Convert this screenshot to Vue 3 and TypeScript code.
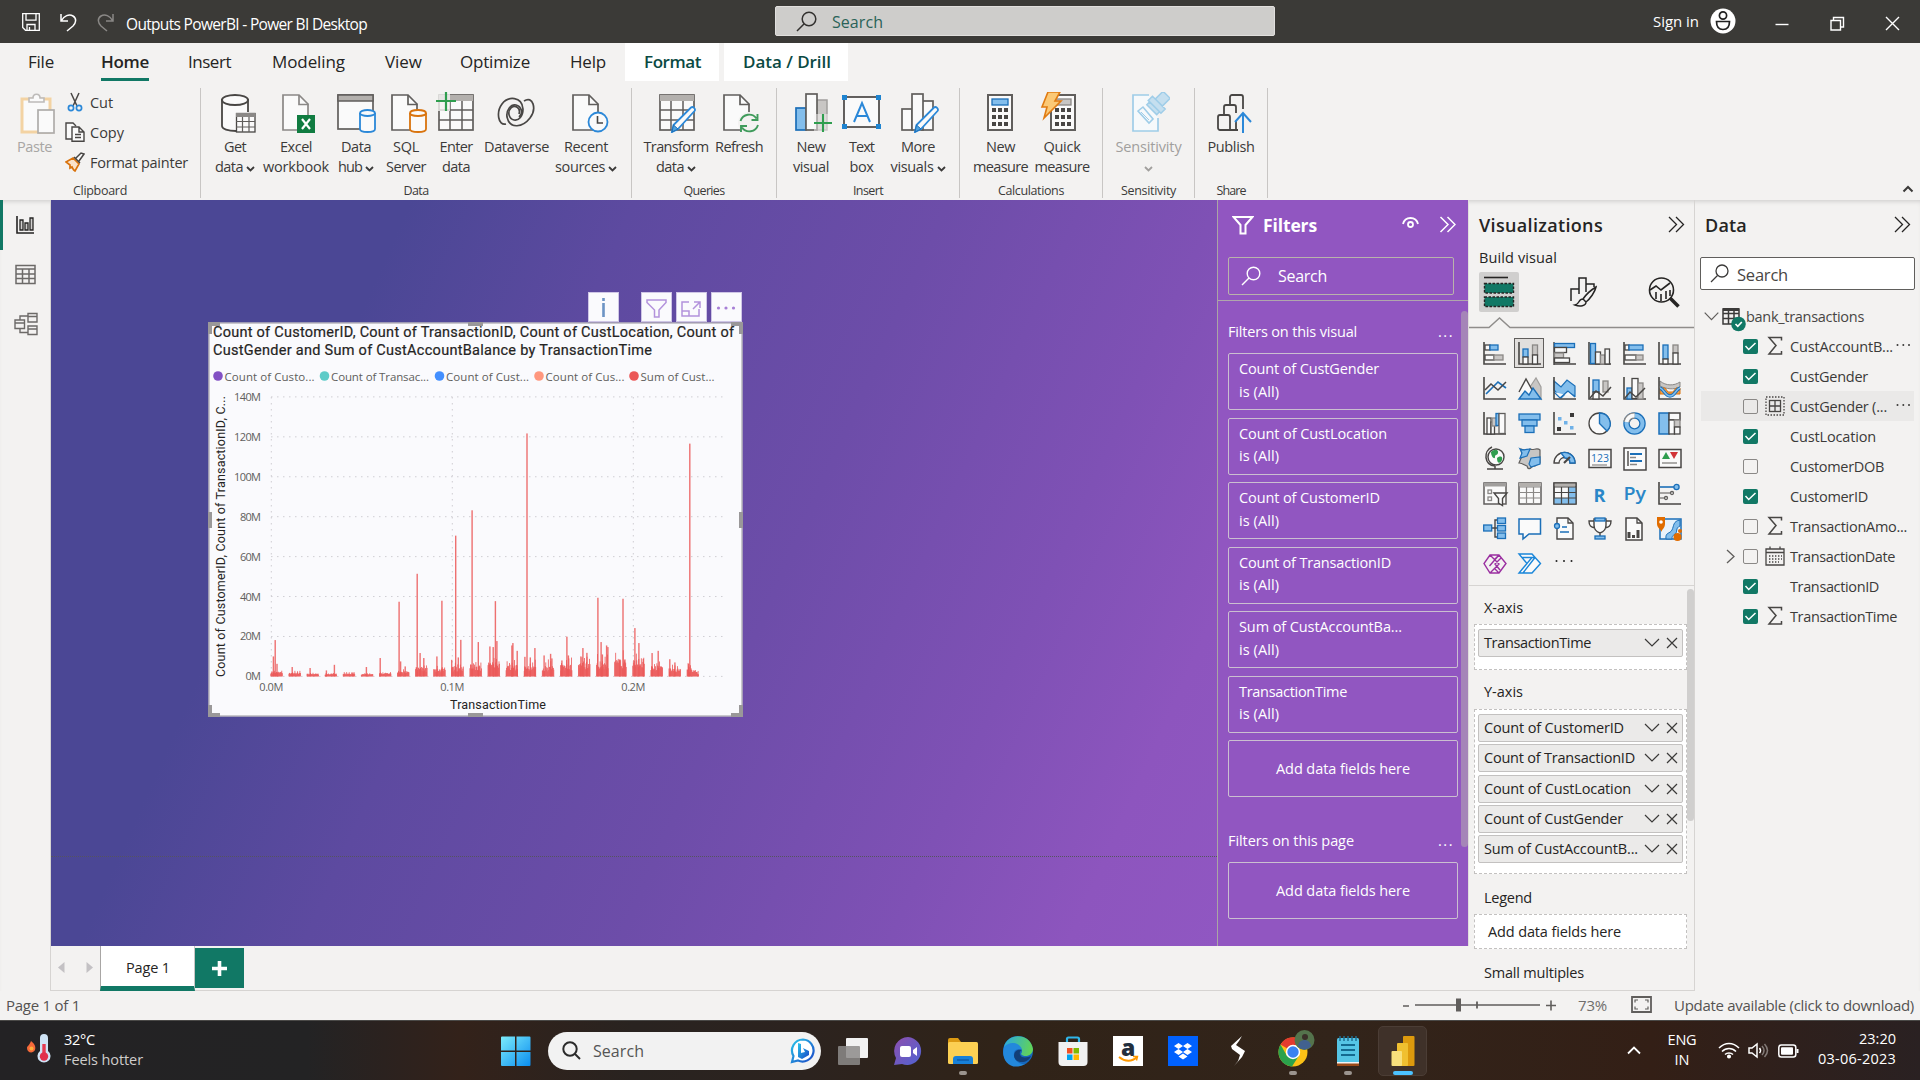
<script setup lang="ts">
import { ref } from 'vue'

interface RibbonButton { icon: string; w: number; lines: [string, number][]; caret?: boolean; off?: boolean; nudge?: number }
interface RibbonGroup { name: string; nameW: number; w: number; pad: number; buttons: RibbonButton[] }
interface Field { label: string; w: number; on: boolean; icon?: string; more?: boolean; hover?: boolean; expand?: boolean }

/* Tightens or loosens tracking so that a label takes the given width. */
const vFit = {
  mounted(el: HTMLElement, binding: { value: number }) {
    const n = (el.textContent ?? '').length
    const w = el.getBoundingClientRect().width
    if (n > 0 && binding.value) el.style.letterSpacing = `${((binding.value - w) / n).toFixed(3)}px`
  },
}

const K = '#484644'
const B = '#83beec'
const BS = '#1b6fb8'
const G = '#c8c6c4'
const R = (x: number, y: number, w: number, h: number, f = '#fafafa', s = K, sw = 1.3) =>
  `<rect x="${x}" y="${y}" width="${w}" height="${h}" fill="${f}" stroke="${s}" stroke-width="${sw}"/>`
const P = (d: string, s = K, sw = 1.4, f = 'none') =>
  `<path d="${d}" fill="${f}" stroke="${s}" stroke-width="${sw}"/>`
const C = (x: number, y: number, r: number, f = 'none', s = K, sw = 1.3) =>
  `<circle cx="${x}" cy="${y}" r="${r}" fill="${f}" stroke="${s}" stroke-width="${sw}"/>`
const AX = P('M1 0V22H23', K, 1.6)
const page = (x: number, s = '#605e5c') => P(`M${x} 3h16l9 9v26h-25z`, s, 1.7, '#fafafa') + P(`M${x + 16} 3v9.500h9.500`, s, 1.7)
const cyl = (x: number, y: number, w: number, h: number, s: string) =>
  P(`M${x} ${y + 3}v${h - 6}c0 4 ${w} 4 ${w} 0v-${h - 6}`, s, 1.8, '#fafafa') +
  `<ellipse cx="${x + w / 2}" cy="${y + 3}" rx="${w / 2}" ry="3" fill="#fafafa" stroke="${s}" stroke-width="1.8"/>`
const pencil = P('M15 40l1.500-7L34 15.500c2-1.500 5 1.500 3.500 3.500L21 37z', '#2b88d8', 1.8, '#fafafa') + P('M15 40l1.500-7 4.500 4z', '#1b6fb8', 1, '#4fa3e0')
const keypad = (x: number) => [18, 25, 32].map((y) => `<path d="M${x} ${y}h16" stroke="${K}" stroke-width="3.800" stroke-dasharray="4 2"/>`).join('')

const icons: Record<string, string> = {
  get: `<path d="M4 8v26c0 3 6 5 14 5V22h12V8z" fill="#fafafa"/><path d="M4 7v27c0 3 6 5 14 5M30 20V7" fill="none" stroke="${K}" stroke-width="1.800"/><ellipse cx="17" cy="8" rx="13" ry="5" fill="#fafafa" stroke="${K}" stroke-width="1.8"/>` + R(18.500, 21.500, 18.500, 18.500) + `<path d="M18 21h19v4H18z" fill="#8a8886"/>` + P('M18 29.500h19M18 35h19M24.500 25v15M31 25v15', '#605e5c', 1.200),
  excel: page(6, '#8a8886') + '<rect x="20" y="23" width="18" height="18" fill="#107c41"/><path d="M25 27l8 10M33 27l-8 10" stroke="#fff" stroke-width="2.200"/>',
  hub: R(2, 3, 35, 34, '#fafafa', '#605e5c', 1.700) + '<path d="M2 3h35v6H2z" fill="#b3b0ad" stroke="#605e5c" stroke-width="1.500"/>' + cyl(24, 18, 15, 22, '#2b88d8'),
  sql: page(4) + cyl(22, 18, 16, 22, '#d9730d'),
  enter: R(4, 3, 34, 35, '#fafafa', '#605e5c', 1.700) + '<path d="M4 3h34v6H4z" fill="#b3b0ad"/>' + P('M4 18h34M4 28h34M15 9v29M27 9v29', '#605e5c', 1.500) + '<path d="M0 0h15v19H0z" fill="#f3f2f1" opacity=".8"/>' + P('M1 9h20M11 0v19', '#2f9e4f', 2.200),
  verse: P('M10 32C2 34 0 20 6 12S26 4 27 17c0 7-4 12-9 11s-7-8-3-12 10 0 8 6', K, 1.700) + P('M28 9c9-6 13 8 6 17S14 38 11 25c-1-7 4-13 9-12s8 8 3 12', K, 1.700),
  recent: page(4) + C(29, 30, 9.500, '#fafafa', '#2b88d8', 1.800) + P('M28.500 24v7h5.500', K, 1.600),
  transform: R(3, 3, 34, 35, '#fafafa', '#605e5c', 1.700) + '<path d="M3 3h34v6H3z" fill="#b3b0ad"/>' + P('M3 18h34M3 28h34M14 9v29M26 9v29', '#605e5c', 1.500) + pencil,
  refresh: page(3) + '<circle cx="28" cy="31" r="11" fill="#f3f2f1"/>' + P('M19.500 29a9 9 0 0 1 16-2.500M36.500 22v6h-6M37 33a9 9 0 0 1-16 2.500M20 40v-6h6', '#3f9b5b', 1.900),
  newvis: R(2, 16, 10, 22, B, BS, 1.700) + R(22, 8, 11, 30, G, '#a19f9d', 1.500) + R(12, 2, 11, 36, '#fafafa', '#605e5c', 1.700) + '<path d="M20 22h20v18H20z" fill="#f3f2f1" opacity=".5"/>' + P('M20 31h18M29 22v18', '#2f9e4f', 2.100),
  textbox: R(3, 5, 35, 30, '#fafafa', K, 1.700) + '<path d="M1 3h5v5H1zM35 3h5v5h-5zM1 32h5v5H1zM35 32h5v5h-5z" fill="#1f84d0"/>' + P('M13 30l8-19 8 19M15.500 24h11', '#2b88d8', 2),
  morevis: R(2, 17, 10, 21, '#fafafa', '#605e5c', 1.700) + R(22, 9, 11, 29, '#fafafa', '#605e5c', 1.700) + R(12, 2, 11, 36, '#fafafa', '#605e5c', 1.700) + pencil,
  calc: R(8, 3, 24, 35, '#fafafa', '#605e5c', 2) + R(12, 7, 16, 6, B, BS, 1.300) + keypad(12),
  quick: R(12, 3, 24, 35, '#fafafa', '#605e5c', 2) + R(16, 7, 16, 6, G, '#8a8886', 1.300) + keypad(16) + P('M9 0h12l-5 9h6L5 26l3-11H3z', '#e07b12', 1.600, '#fbc976'),
  sens: P('M20 3H4v36h25V26', '#9fcde8', 1.700, '#f6f9fb') + '<g transform="rotate(45 27 12)" fill="#c5dfef" stroke="#9fcde8" stroke-width="1.500"><path d="M19 9h18v6H19zM23 -2h10v11H23zM21 15h14v4H21z"/></g><path d="M9 19l5-4 10 12-4 4z" fill="#f6f9fb" stroke="#9fcde8" stroke-width="1.600"/><path d="M12 20l8 8" stroke="#9fcde8"/>',
  publish: P('M25 38H7a2 2 0 0 1-2-2V25a2 2 0 0 1 2-2h8a2 2 0 0 1 2 2v13M11 22v-7a2 2 0 0 1 2-2h8a2 2 0 0 1 2 2v6M17 12V5a2 2 0 0 1 2-2h9a2 2 0 0 1 2 2v12M23 29v9', K, 1.800) + P('M30 41V22M22 30l8-9 8 9', '#2b88d8', 2),
  paste: P('M6 6h28v33H6z', '#f3d3a3', 3, '#fafafa') + P('M13 9V5h4c0-5 7-5 7 0h4v4z', '#bdbbb9', 1.600, '#fafafa') + R(22, 17, 16, 23, '#fafafa', '#aeacaa', 1.700),
}

const viz: string[] = [
  AX + R(2, 3, 5, 5) + R(7, 3, 8, 5, B, BS) + R(2, 13, 9, 5) + R(11, 13, 9, 5, G, '#8a8886'),
  AX + R(5, 7, 5, 8, B, BS) + R(5, 15, 5, 7) + R(14.500, 3, 5, 10, G, '#8a8886') + R(14.500, 13, 5, 9),
  P('M1 0V23M1 22H23') + R(1.500, 1.500, 20, 4, B, BS) + R(1.500, 5.500, 12, 5) + R(1.500, 11, 9, 5, G, '#8a8886') + R(1.500, 16, 15, 4.500),
  AX + R(2.500, 1.500, 5, 20, B, BS) + R(7.500, 10, 5, 12) + R(12.500, 13, 4.500, 9, G, '#8a8886') + R(17, 7, 4.500, 15),
  AX + R(2, 3, 4, 5) + R(6, 3, 14, 5, B, BS) + R(2, 13, 11, 5) + R(13, 13, 7, 5, G, '#8a8886'),
  AX + R(5, 3, 5, 14, B, BS) + R(5, 17, 5, 5) + R(15, 3, 5, 8, G, '#8a8886') + R(15, 11, 5, 11),
  AX + P('M3 17L15 5l8 6', BS, 1.600) + P('M2 13l6-6 7 6 8-8', K, 1.500),
  P('M12 10l6-9 5 9v12z', '#a19f9d', 1.200, G) + P('M1 15L8 2l10 18', K, 1.400, '#fafafa') + P('M1 22l6-8 4 4 4-7 8 11z', BS, 1.400, B),
  P('M1 4l7 6 6-7 8 6v10l-8-4-6 6-7-8z', BS, 1.200, B) + P('M1 15l6 6 8-7 7 6', BS, 1.200, '#fafafa') + AX,
  AX + R(5, 3, 6, 12, B, BS) + R(5, 15, 6, 7) + R(15, 4, 5, 11, G, '#8a8886') + P('M2 21l6-7 7 5 8-9', K, 1.500),
  AX + R(4, 11, 5, 11, B, BS) + R(9, 1.500, 6, 20) + R(15, 6, 5, 16, G, '#8a8886') + P('M2 21l5-6 6 5 9-9', K, 1.500),
  P('M2 4c6 5 14 5 20 1v5c-6 3-14 2-20-1z', '#8a8886', 1, G) + P('M2 11h5l3 4h5l3-4h4v6H2z', '#d9730d', 1, '#f2a04d') + P('M2 11c4 1 5 8 10 8s6-7 10-8', BS, 3.400) + P('M2 11c4 1 5 8 10 8s6-7 10-8', B, 1.400) + AX,
  AX + R(4, 6, 4, 16) + R(8, 10, 3.500, 12) + R(9, 6, 5, 8, G, '#8a8886') + R(13, 1.500, 3, 12, B, BS) + R(16, 1.500, 6, 20, '#fafafa', '#605e5c'),
  R(1, 2, 21, 6, B, BS) + R(4, 8, 15, 6, B, BS) + R(7, 14, 9, 6.500, B, BS),
  AX + '<path d="M17 1h4v4h-4zM4 15h4v4H4z" fill="#3b3a39"/><path d="M5 5h3.500v3.500H5zM11 9h3.500v3.500H11zM17 14h3.500v3.500H17z" fill="#6fb1e8"/>',
  C(11.500, 11.500, 10.500, '#fafafa') + P('M11.500 11.500V1a10.500 10.500 0 0 1 7.500 18z', BS, 1.400, B),
  C(11.500, 11.500, 8, 'none', BS, 6.500) + C(11.500, 11.500, 8, 'none', B, 4) + P('M11.500 3.500A8 8 0 0 0 3.500 10', '#8a8886', 6.500) + P('M11.500 3.500A8 8 0 0 0 3.500 10', '#fafafa', 4),
  R(1, 1, 10, 21, B, BS, 1.500) + R(11, 1, 11, 7, '#fafafa', K, 1.500) + R(11, 8, 5.500, 14) + R(16.500, 8, 5.500, 7, G, '#8a8886') + R(16.500, 15, 5.500, 7),
  C(13, 10, 8, '#fafafa', K, 1.400) + '<path d="M8 5c4-4 8-2 7 1s-3 1-3 4-4 0-4-5zM14 11c4-3 6-1 5 2s-5 5-5-2z" fill="#2f9e4f"/>' + P('M9 0C0 4 1 18 12 19M12 19v3M4 22h16', K, 1.500),
  P('M3 2c4 2 8 1 9 0 3 2 7-2 10 1v13c-3 0-3 4-7 3-3 3-5 4-6 0-3-1-4-3-8-3l3-7z', '#605e5c', 1.200, G) + P('M2 2c3 2 7 0 10 0l-3 7 -7 2 2-5z', BS, 1.200, B) + P('M13 11l9-1v7l-9 3-2-3z', BS, 1.200, B),
  P('M1 16a10.500 10.500 0 0 1 21 0h-5a5.500 5.500 0 0 0-11 0z', K, 1.300, '#fafafa') + P('M8 6a10.500 10.500 0 0 1 14 10h-5c0-3-2-5-5-5z', BS, 1.300, B) + P('M11 16l6-6', K, 2.200),
  R(1, 2.500, 22, 18, '#fafafa', K, 1.500) + `<text x="3" y="14.500" font-family="Open Sans" font-size="10.500" textLength="18" fill="${BS}">123</text>` + P('M4 18h15', '#8a8886', 1.200),
  R(1, 1, 22, 22, '#fafafa', K, 1.500) + P('M5 4v15', K, 1.400) + P('M7 7h12M7 14h12', BS, 2.200) + P('M7 10.500h6M7 17.500h7', '#8a8886', 1.400),
  R(1, 2.500, 22, 18, '#fafafa', K, 1.500) + '<path d="M4 12l4-7 4 7z" fill="#2f9e4f"/><path d="M12 5h8l-4 7z" fill="#d13438"/>' + P('M4 16h15', '#8a8886', 1.400),
  P('M1 1h22v21H1z', '#605e5c', 1.500, '#fafafa') + '<path d="M1 1h22v3.500H1z" fill="#a19f9d"/>' + R(5, 8, 3.500, 3.500, '#fafafa', '#8a8886') + R(5, 15, 3.500, 3.500, '#fafafa', '#8a8886') + P('M11 11h13l-4.500 5.500v7l-4-2.500v-4.500z', K, 1.400, '#fafafa'),
  R(1, 1, 22, 21, '#fafafa', '#605e5c', 1.500) + '<path d="M1 1h22v3.500H1z" fill="#b3b0ad"/>' + P('M1 5h22M1 10.500h22M1 16h22M8.500 5v17M15.500 5v17', '#8a8886', 1.200),
  R(1, 1, 22, 21, '#fafafa', K, 1.500) + `<path d="M15.500 5H23v17H1v-6h14.500z" fill="${B}"/><path d="M1 1h22v3.500H1z" fill="#b3b0ad"/>` + P('M1 5h22M1 10.500h22M1 16h22M8.500 5v17M15.500 5v17M1 1h22v21H1z', K, 1.200),
  `<text x="5.500" y="19.500" font-family="Open Sans" font-weight="700" font-size="18" textLength="12" lengthAdjust="spacingAndGlyphs" fill="#2a87c8">R</text>`,
  `<text x=".5" y="17.500" font-family="Open Sans" font-weight="600" font-size="18" textLength="22.500" lengthAdjust="spacingAndGlyphs" fill="#2a87c8">Py</text>`,
  AX + P('M2 5h14', BS, 1.600) + C(18.500, 5, 2.600, B, BS) + P('M2 11h11M2 16h5', '#8a8886', 1.300) + C(14, 11, 1.500, '#fafafa', '#605e5c') + C(8, 16, 1.500, '#fafafa', '#605e5c'),
  P('M8 11h6M14 3h-2v17h2M12 11h3', K, 1.400) + R(.7, 8, 8, 6, B, BS) + R(14.500, 1, 8, 5.500, B, BS) + R(14.500, 8.500, 8, 5.500, B, BS) + R(14.500, 16, 8, 5.500, B, BS),
  P('M1 2h21.500v15H11l-6 5v-5H1z', BS, 1.500, '#fafafa'),
  P('M4 6V1h11l5 5v16H4V12', K, 1.400, '#fafafa') + P('M15 1v5h5', K, 1.300) + C(4, 9, 2.500, B, BS) + P('M9 10h5M7 15h6M13 15h3', BS, 1.400),
  P('M6 2h12v6c0 5-3 7-6 8-3-1-6-3-6-8zM6 4H1c0 5 2 6 6 7M18 4h5c0 5-2 6-6 7M12 16v4', K, 1.400, '#fafafa') + R(7, 1, 10, 3, B, BS) + R(7, 19, 10, 3, B, BS),
  P('M3 1h11l5 5v17H3z', K, 1.500, '#fafafa') + P('M14 1v5h5', K, 1.300) + P('M6 21v-6M10.500 21v-3M15 21v-8', K, 3),
  R(2, 2, 21, 20, '#eaf3fb', BS, 1.500) + `<path d="M8 22c-1-7 4-5 6-9s1-9 8-10v6c-5 2-2 6-5 8s-3 3-3 5z" fill="${B}" stroke="${BS}"/><path d="M0 0h7v7c0 4-3 5-3.500 8C3 12-1 11-1 7V0z" fill="#e06c00"/><circle cx="3" cy="5" r="1.800" fill="#fff"/><circle cx="19.500" cy="20" r="4" fill="#e06c00"/><circle cx="22" cy="14" r="2" fill="#e06c00"/>`,
  P('M7 2h9l7 8.500-7 9.500H7L1 10.500zM7 2l9 9-4.500 4.500L7 20M16 2L6.500 13M11.500 15.500L16 20M11.500 6.500L16 2M18 5l-6 6 5 6', '#9a2fa0', 1.400),
  P('M1 1h13l8.500 9.500-8.500 9.500H1l8-9.500zM3.500 4.500h13.500M5 20l12-15.500M3.500 17L14 4.500', '#1a86d9', 1.400, '#fafafa'),
]

const groups: RibbonGroup[] = [
  { name: 'Data', nameW: 25, w: 431, pad: 4, buttons: [
    { icon: 'get', w: 60, lines: [['Get', 22], ['data', 28]], caret: true, nudge: 3.500 },
    { icon: 'excel', w: 62, lines: [['Excel', 32], ['workbook', 66]], nudge: 1 },
    { icon: 'hub', w: 58, lines: [['Data', 30], ['hub', 24]], caret: true },
    { icon: 'sql', w: 42, lines: [['SQL', 26], ['Server', 40]], nudge: 2 },
    { icon: 'enter', w: 58, lines: [['Enter', 33], ['data', 28]], nudge: -1 },
    { icon: 'verse', w: 63, lines: [['Dataverse', 65]] },
    { icon: 'recent', w: 76, lines: [['Recent', 44], ['sources', 50]], caret: true, nudge: 3 } ] },
  { name: 'Queries', nameW: 41, w: 145, pad: 6, buttons: [
    { icon: 'transform', w: 76, lines: [['Transform', 65], ['data', 28]], caret: true, nudge: 1 },
    { icon: 'refresh', w: 50, lines: [['Refresh', 48]], nudge: 2 } ] },
  { name: 'Insert', nameW: 30, w: 183, pad: 8, buttons: [
    { icon: 'newvis', w: 52, lines: [['New', 29], ['visual', 36]], nudge: 3 },
    { icon: 'textbox', w: 49, lines: [['Text', 25], ['box', 24]] },
    { icon: 'morevis', w: 64, lines: [['More', 34], ['visuals', 43]], caret: true, nudge: 2 } ] },
  { name: 'Calculations', nameW: 66, w: 143, pad: 10, buttons: [
    { icon: 'calc', w: 61, lines: [['New', 29], ['measure', 55]] },
    { icon: 'quick', w: 62, lines: [['Quick', 37], ['measure', 55]], nudge: -3 } ] },
  { name: 'Sensitivity', nameW: 55, w: 92, pad: 4, buttons: [
    { icon: 'sens', w: 83, lines: [['Sensitivity', 66], ['', 0]], caret: true, off: true, nudge: 1 } ] },
  { name: 'Share', nameW: 29, w: 73, pad: 8, buttons: [
    { icon: 'publish', w: 56, lines: [['Publish', 47]], nudge: 2 } ] },
]

const tabs: [string, number, number][] = [['File', 26, 28], ['Home', 48, 47], ['Insert', 43, 39], ['Modeling', 73, 41], ['View', 37, 40], ['Optimize', 70, 38], ['Help', 36, 40]]
const activeTab = ref('Home')

const filters: [string, number][] = [
  ['Count of CustGender', 140], ['Count of CustLocation', 148], ['Count of CustomerID', 141],
  ['Count of TransactionID', 152], ['Sum of CustAccountBa...', 163], ['TransactionTime', 108],
]
const yFields: [string, number][] = [
  ['Count of CustomerID', 140], ['Count of TransactionID', 151], ['Count of CustLocation', 147], ['Count of CustGender', 139], ['Sum of CustAccountB...', 154],
]
const fields: Field[] = [
  { label: 'CustAccountB...', w: 103, on: true, icon: 'sum', more: true },
  { label: 'CustGender', w: 78, on: true },
  { label: 'CustGender (...', w: 97, on: false, icon: 'grp', more: true, hover: true },
  { label: 'CustLocation', w: 86, on: true },
  { label: 'CustomerDOB', w: 94, on: false },
  { label: 'CustomerID', w: 78, on: true },
  { label: 'TransactionAmo...', w: 117, on: false, icon: 'sum' },
  { label: 'TransactionDate', w: 105, on: false, icon: 'cal', expand: true },
  { label: 'TransactionID', w: 89, on: true },
  { label: 'TransactionTime', w: 107, on: true, icon: 'sum' },
]
const fieldIcons: Record<string, string> = {
  sum: P('M16.500 4.500V1.500H4l7 8-7 8.500h12.500v-3', K, 1.500),
  grp: `<rect x="1" y="1" width="18" height="18" fill="none" stroke="${K}" stroke-width="1.300" stroke-dasharray="1.500 1.500"/>` + R(4.500, 4.500, 11, 11, 'none', K, 1.300) + P('M10 4.500v11M4.500 10h11', K, 1.300),
  cal: P('M1 3h18v16H1zM1 6.500h18M5 .500v3M15 .500v3', K, 1.300) + '<path d="M4 10h13M4 13h13M4 16h10" stroke="#484644" stroke-width="1.400" stroke-dasharray="1.400 1.600"/>',
}

/* chart geometry */
const Y0 = 354.400
const perM = 1.9964
const xOf = (t: number) => 63.300 + t * 1810
const legend: [string, string, number, number][] = [
  ['Count of Custo...', '#8250c4', 10, 90], ['Count of Transac...', '#5ecbc8', 116.500, 98], ['Count of Cust...', '#438fff', 231.500, 83],
  ['Count of Cus...', '#ff977e', 331, 79], ['Sum of Cust...', '#eb5757', 426, 74],
]
const baseM = [2, 1.400, .8, .8, 1, .8, 1.200, 2, 4, 3.400, 4.600, 5.400, 6.500, 5.400, 4.800, 4.800, 5.400, 7, 6.500, 7.800, 7.600, 5, 3.600, 4.500]
const peaks: [number, number][] = [
  [20.500, 10], [22.300, 18.200], [24.100, 6.300], [39.300, 4.700], [57.200, 4.200], [73.500, 3], [81.500, 5.800], [100, 2], [113.500, 4.700], [127.300, 9.200], [146.200, 37.400], [147.700, 7.500], [152.300, 5],
  [164.300, 51.400], [167.200, 11.700], [170.900, 9.200], [184, 10], [189, 37.900], [198.800, 8.300], [202.800, 70.500], [205.400, 9.500], [207.900, 18.300], [219.200, 83.200], [225.400, 17.200],
  [237, 15], [240.300, 14.700], [242.500, 37.700], [244, 17.700], [259, 15.500], [260, 16.700], [264.300, 12.800], [272, 9.800], [274.100, 121.700], [277.400, 9.500], [282, 14.200],
  [291.200, 10.500], [297.700, 11.300], [299, 9], [309, 8], [314, 19.900], [315.500, 10.500], [328, 10], [330, 14.200], [334, 11.800], [345, 39.400], [348.200, 17.200], [349.500, 11], [353.700, 15.500], [355, 14.700],
  [367, 8.500], [370.100, 38.900], [372, 8.500], [382, 24.200], [386, 16.700], [390.400, 8.800], [399.200, 11.700], [405.300, 12.800], [416.900, 8.600], [422, 7], [435.700, 6.200], [436.900, 116.600],
]
interface Bar { x: number; h: number; o: number; w: number }
const bars: Bar[] = []
let seed = 11
const rnd = () => ((seed = (seed * 16807) % 2147483647) / 2147483647)
baseM.forEach((m, k) => {
  const x0 = xOf(k * 0.01) - 0.500
  for (let i = 0; i < 24; i++) {
    const taper = k === 23 ? 1.100 - i / 28 : 1
    const v = m * taper * (0.500 + rnd() * 0.700) * (i % 5 === 2 ? 1.400 : .85)
    bars.push({ x: x0 + i * 0.500, h: v * perM + 1, o: 1, w: .8 })
  }
})
peaks.forEach(([x, v]) => {
  bars.push({ x: x + 44.900, h: v * perM, o: .85, w: 1.400 })
})
const yTicks = [140, 120, 100, 80, 60, 40, 20, 0]
const xTicks = [0, 0.1, 0.2]

const taskIcons: { svg: string; dot?: string; on?: boolean }[] = [
  { svg: '<rect x="8" y="2" width="22" height="20" rx="1" fill="#f1f1f1"/><rect x="0" y="10" width="22" height="19" rx="1" fill="#8d8b89" opacity=".85"/>' },
  { svg: '<defs><linearGradient id="ch" x1="0" y1="0" x2="1" y2="1"><stop offset="0" stop-color="#8e4fae"/><stop offset="1" stop-color="#4f63d2"/></linearGradient></defs><path d="M15 1a14 14 0 1 1-6 27l-8 1 2-7A14 14 0 0 1 15 1z" fill="url(#ch)"/><rect x="7" y="10" width="11" height="11" rx="2" fill="#fff"/><path d="M20 14l4-3v9l-4-3z" fill="#fff"/>' },
  { svg: '<path d="M0 4q0-2 2-2h8l3 4h12v8H0z" fill="#dc9a12"/><rect x="0" y="6" width="30" height="22" rx="1.500" fill="#fcd053"/><path d="M5 28v-5q0-3 3-3h14q3 0 3 3v5z" fill="#1780d8"/><path d="M9 24h12" stroke="#0f5ba8" stroke-width="1.500"/>', dot: 'g' },
  { svg: '<defs><linearGradient id="ed" x1="0" y1=".2" x2="1" y2=".4"><stop offset="0" stop-color="#2aa9e0"/><stop offset="1" stop-color="#62d457"/></linearGradient></defs><circle cx="15" cy="15" r="15" fill="#1668bd"/><path d="M1 11C4-3 27-4 30 13c0 7-9 9-12 5 3-4-1-9-7-8-4 0-8 2-10 1z" fill="url(#ed)"/><path d="M1 11c6-7 17-4 18 3-5-2-9 0-8 6 1 5 6 9 11 8C8 36-3 24 1 11z" fill="#2388dc"/><path d="M19 14c-3 1-3 5 0 7 3 1 7 0 9-1-3 8-16 8-17 0 0-5 4-7 8-6z" fill="#123f77"/>' },
  { svg: '<path d="M9 7V3q0-1.500 1.500-1.500h9Q21 1.500 21 3v4" fill="none" stroke="#2fb6ea" stroke-width="2.200"/><path d="M.5 6h29v20q0 4-4 4h-21q-4 0-4-4z" fill="#f1f1f1"/><path d="M9 12h5.500v5.500H9z" fill="#f25022"/><path d="M15.500 12H21v5.500h-5.500z" fill="#7fba00"/><path d="M9 18.500h5.500V24H9z" fill="#00a4ef"/><path d="M15.500 18.500H21V24h-5.500z" fill="#ffb900"/>' },
  { svg: '<rect width="30" height="30" fill="#fff"/><text x="8" y="20" font-family="Open Sans" font-weight="800" font-size="23" fill="#232f3e">a</text><path d="M6 21c6 5 13 5 18 0" fill="none" stroke="#f90" stroke-width="2"/><path d="M20 20.500l4.500 0-1 4" fill="none" stroke="#f90" stroke-width="1.400"/>' },
  { svg: '<rect width="30" height="30" fill="#0061fe"/><path d="M10.500 7l4.500 3-4.500 3L6 10zM19.500 7l4.500 3-4.500 3-4.500-3zM10.500 13l4.500 3-4.500 3L6 16zM19.500 13l4.500 3-4.500 3-4.500-3zM15 17.500l4.500 3-4.500 3-4.500-3z" fill="#fff"/>' },
  { svg: '<path d="M19 0L8 10l1 3 8 6-2 6-4 5 8-9 3-6-9-6 3-4zM9 11l10 8" fill="#fff"/>' },
  { svg: '<circle cx="15" cy="16" r="14.500" fill="#fbc116"/><path d="M15 16L2.500 8.500A14.500 14.500 0 0 1 28 9H15z" fill="#e33b2e"/><path d="M2.500 8.500A14.500 14.500 0 0 0 14 30.500l7-11-6-3.500-6 4z" fill="#2ba24c"/><circle cx="15" cy="16" r="7.200" fill="#fff"/><circle cx="15" cy="16" r="5.700" fill="#3b82f0"/><circle cx="26.500" cy="4" r="10" fill="#54734c"/><circle cx="27" cy="1" r="3" fill="#3a2f29"/><path d="M20 10c1-8 12-8 13 0-3 4-10 5-13 0z" fill="#41618f"/>', dot: 'g' },
  { svg: '<rect x="4" y="2" width="22" height="26" rx="1.500" fill="#55c5e5"/><path d="M4 26h22v4H4z" fill="#9a4a18"/><path d="M4 26h22v1.500H4z" fill="#f3f3f3"/><path d="M7 0v5M11 0v5M15 0v5M19 0v5M23 0v5" stroke="#1f6f92" stroke-width="1.500"/><path d="M8 9h14M8 14h14M8 19h14" stroke="#146a90" stroke-width="1.800"/>', dot: 'g' },
  { svg: '<rect x="15" y="0" width="11.500" height="30" rx="1" fill="#dd9a0d"/><rect x="9" y="7" width="11" height="23" rx="1" fill="#f0c030"/><rect x="3.500" y="15" width="10.500" height="15" rx="1" fill="#f8e07c"/>', dot: 'b', on: true },
]
</script>

<template>
  <div class="app">
    <header class="titlebar">
      <div class="quick">
        <svg width="18" height="18" viewBox="0 0 18 18" fill="none" stroke="#fff" stroke-width="1.300"><path d="M.7.7h16.600v16.600H3.500L.7 14.500zM4 .7v6.500h10V.7M5 17v-5.500h8V17M7.500 14v3" /></svg>
        <svg width="17" height="19" viewBox="0 0 17 19" fill="none" stroke="#fff" stroke-width="1.500"><path d="M1 1v7h7M1.500 7.500C4 3 9 .5 13 3s3 7 0 10l-6 5" /></svg>
        <svg class="dim" width="17" height="19" viewBox="0 0 17 19" fill="none" stroke="#8a8886" stroke-width="1.500"><path d="M16 1v7H9M15.500 7.500C13 3 8 .5 4 3s-3 7 0 10l6 5" /></svg>
        <span v-fit="241" class="doc">Outputs PowerBI - Power BI Desktop</span>
      </div>
      <div class="topsearch">
        <svg width="21" height="21" viewBox="0 0 21 21" fill="none" stroke="#33312f" stroke-width="1.500"><circle cx="13" cy="8" r="6.800" /><path d="M8.200 12.800L1 20" /></svg>
        <span v-fit="51">Search</span>
      </div>
      <div class="winbtns">
        <span v-fit="46" class="signin">Sign in</span>
        <svg class="avatar" width="26" height="26" viewBox="0 0 26 26"><circle cx="13" cy="13" r="12.500" fill="#fff" /><circle cx="13" cy="7.500" r="3.600" fill="none" stroke="#222" stroke-width="1.700" /><path d="M6.500 13.500h13c0 5-2 8-6.500 8s-6.500-3-6.500-8z" fill="none" stroke="#222" stroke-width="1.700" /></svg>
        <svg width="15" height="15" viewBox="0 0 15 15"><path d="M.5 8.500h13" stroke="#fff" stroke-width="1.400" /></svg>
        <svg width="15" height="15" viewBox="0 0 15 15" fill="none" stroke="#fff" stroke-width="1.400"><path d="M1 4.500h9.500V14H1zM3.500 4V1.500h10V11H11" /></svg>
        <svg width="15" height="15" viewBox="0 0 15 15"><path d="M1 1l13 13M14 1L1 14" stroke="#fff" stroke-width="1.400" /></svg>
      </div>
    </header>

    <nav class="tabs">
      <span v-for="t in tabs" :key="t[0]" class="tab" :class="{ active: activeTab === t[0] }" :style="{ width: t[1] + 'px', marginLeft: t[2] + 'px' }"><b v-fit="t[1]">{{ t[0] }}</b></span>
      <span class="ctx first"><b v-fit="57">Format</b></span>
      <span class="ctx second"><b v-fit="88">Data / Drill</b></span>
    </nav>

    <section class="ribbon">
      <div class="group clip">
        <div class="clip-body">
          <div class="paste">
            <svg width="41" height="41" viewBox="0 0 41 41" v-html="icons.paste"></svg>
            <span v-fit="35">Paste</span>
          </div>
          <div class="clip-list">
            <div><svg width="20" height="20" viewBox="0 0 20 20" fill="none"><path d="M6 1l6 13M14 1L8 14" stroke="#484644" stroke-width="1.500" /><g stroke="#2b88d8" stroke-width="1.700"><circle cx="6" cy="16" r="2.600" /><circle cx="14" cy="16" r="2.600" /></g></svg><span v-fit="23">Cut</span></div>
            <div><svg width="20" height="20" viewBox="0 0 20 20" fill="#fafafa" stroke="#484644" stroke-width="1.400"><path d="M7 17H1V1h7l3 3" /><path d="M7 5h7l5 5v9.300H7zM14 5v5h5M10 12.500h6M10 15.500h6" /></svg><span v-fit="34">Copy</span></div>
            <div><svg width="20" height="20" viewBox="0 0 20 20"><path d="M1 10l7-4 6 6-4 7c-2-1-2-2-3-4l-2 1v-3z" fill="#fbe3cb" stroke="#d9730d" stroke-width="1.700" /><path d="M9 5l6 6M11 6l5-5 3 1-5 7" fill="#fafafa" stroke="#484644" stroke-width="1.500" /></svg><span v-fit="98">Format painter</span></div>
          </div>
        </div>
        <div class="gname"><span v-fit="54">Clipboard</span></div>
      </div>
      <div v-for="g in groups" :key="g.name" class="group" :style="{ width: g.w + 'px' }">
        <div class="gbody" :style="{ paddingLeft: g.pad + 'px' }">
          <div v-for="(b, i) in g.buttons" :key="i" class="rbtn" :class="{ off: b.off }" :style="{ width: b.w + 'px' }">
            <svg width="41" height="41" viewBox="0 0 41 41" :style="{ marginLeft: (b.nudge ?? 0) * 2 + 'px' }" v-html="icons[b.icon]"></svg>
            <div v-for="(l, j) in b.lines" :key="j" class="rline">
              <span v-fit="l[1]">{{ l[0] }}</span>
              <svg v-if="b.caret && j === 1" class="caret" width="9" height="6" viewBox="0 0 9 6"><path d="M1 1l3.500 3.500L8 1" fill="none" stroke="currentColor" stroke-width="1.800" /></svg>
            </div>
          </div>
        </div>
        <div class="gname"><span v-fit="g.nameW">{{ g.name }}</span></div>
      </div>
      <svg class="collapse" width="12" height="8" viewBox="0 0 12 8"><path d="M1.500 6.500L6 2l4.500 4.500" fill="none" stroke="#3b3a39" stroke-width="2" /></svg>
    </section>

    <main class="main">
      <aside class="rail">
        <div class="railitem on"><svg width="20" height="20" viewBox="0 0 20 20" fill="#d0cfce" stroke="#252423" stroke-width="1.300"><path d="M2 1v17h17" fill="none" stroke-width="1.600" /><path d="M5 5h3v10H5zM10 8h3v7h-3zM15 3h3v12h-3z" /></svg></div>
        <div class="railitem"><svg width="21" height="21" viewBox="0 0 21 21" fill="none" stroke="#6c6a68" stroke-width="1.500"><path d="M1 1.500h19v18H1zM1 5h19M1 10h19M1 14.500h19M7.500 5v14M14 5v14" /></svg></div>
        <div class="railitem"><svg width="24" height="24" viewBox="0 0 24 24" fill="none" stroke="#6c6a68" stroke-width="1.400"><path d="M14 1.500h9v8.500h-9zM14 4.500h9M1 8h9.500v8.500H1zM1 11h9.500M14 14h9v8.500h-9zM14 17h9M6 8V4h8M6 16.500v4h8" /></svg></div>
      </aside>

      <div class="center">
        <div class="stage">
          <div class="canvas">
            <div class="pageedge"></div>
            <div class="vtools">
              <div class="vt info"><svg width="29" height="28" viewBox="0 0 29 28"><path d="M14.500 10v14M14.500 5v3" stroke="#6c93c4" stroke-width="2.600" /></svg></div>
              <div class="vt"><svg width="29" height="28" viewBox="0 0 29 28"><path d="M5 7h19v2.500L17 17v7h-4.500v-7L5 9.500z" fill="none" stroke="#b392dc" stroke-width="1.500" /></svg></div>
              <div class="vt"><svg width="29" height="28" viewBox="0 0 29 28" fill="none" stroke="#b392dc" stroke-width="1.500"><path d="M12 9H5v14h17v-7M17 9h6v6M23 9l-7 7M5 18h7v5" /></svg></div>
              <div class="vt"><svg width="29" height="28" viewBox="0 0 29 28" fill="#a77fd6"><circle cx="6.500" cy="15" r="1.600" /><circle cx="14" cy="15" r="1.600" /><circle cx="21.500" cy="15" r="1.600" /></svg></div>
            </div>
            <svg class="chart" width="536" height="396" viewBox="0 0 536 396">
              <rect x="1" y="1" width="533" height="393" fill="#fafafd" stroke="#b9b7bd" stroke-width="1.500" />
              <g font-family="Roboto, 'Open Sans', sans-serif" font-size="14.500" fill="#252423" stroke="#252423" stroke-width=".2">
                <text x="5" y="15" textLength="521">Count of CustomerID, Count of TransactionID, Count of CustLocation, Count of</text>
                <text x="5" y="33" textLength="439">CustGender and Sum of CustAccountBalance by TransactionTime</text>
              </g>
              <g font-family="'Open Sans', sans-serif" font-size="11.500" fill="#605e5c">
                <template v-for="l in legend" :key="l[0]">
                  <circle :cx="l[2]" cy="54" r="4.800" :fill="l[1]" />
                  <text :x="l[2] + 6.500" y="58.500" :textLength="l[3]">{{ l[0] }}</text>
                </template>
                <text v-for="t in yTicks" :key="'y' + t" x="53" :y="Y0 - t * perM + 4" text-anchor="end" font-size="11" :textLength="t >= 100 ? 27 : t ? 21 : 15.500">{{ t }}M</text>
                <text v-for="t in xTicks" :key="'x' + t" :x="xOf(t)" y="369" text-anchor="middle" font-size="11" textLength="24">{{ t.toFixed(1) }}M</text>
              </g>
              <g stroke="#cfced3" stroke-width="1" stroke-dasharray="1.500 4.500">
                <line v-for="t in yTicks" :key="'h' + t" x1="63" x2="518" :y1="Y0 - t * perM" :y2="Y0 - t * perM" />
                <line v-for="t in xTicks" :key="'v' + t" :x1="xOf(t)" :x2="xOf(t)" y1="75" :y2="Y0" />
              </g>
              <rect v-for="(b, i) in bars" :key="i" :x="b.x - b.w / 2" :y="Y0 - b.h" :width="b.w" :height="b.h" fill="#eb5757" :opacity="b.o" />
              <g font-family="Roboto, 'Open Sans', sans-serif" font-size="12.500" fill="#252423">
                <text x="242" y="387" textLength="96">TransactionTime</text>
                <text transform="translate(17 355) rotate(-90)" textLength="281">Count of CustomerID, Count of TransactionID, C...</text>
              </g>
              <g fill="none" stroke="#9a9899" stroke-width="4">
                <path d="M2 12V2H12M523 2h10v10M2 383v10h10M533 383v10h-10M260 2h15M260 393h15M2 190v16M533 190v16" />
              </g>
            </svg>
          </div>

          <aside class="filters">
            <div class="fhead">
              <svg width="22" height="20" viewBox="0 0 22 20" fill="none" stroke="#fff" stroke-width="2"><path d="M1.500 2h19L13.500 10v8.500h-5V10z" /></svg>
              <span v-fit="54" class="ftitle">Filters</span>
              <svg class="eye" width="17" height="13" viewBox="0 0 17 13" fill="none" stroke="#fff" stroke-width="1.800"><path d="M1 8c2-8 13-8 15 0" /><circle cx="8.500" cy="8.500" r="2.500" /></svg>
              <svg class="chev" width="17" height="17" viewBox="0 0 17 17" fill="none" stroke="#fff" stroke-width="1.500"><path d="M1.500 1L9 8.500 1.500 16M8.500 1L16 8.500 8.500 16" /></svg>
            </div>
            <div class="fsearch">
              <svg width="20" height="20" viewBox="0 0 20 20" fill="none" stroke="#fff" stroke-width="1.400"><circle cx="12.500" cy="7.500" r="6.300" /><path d="M8 12l-7 7" /></svg>
              <span v-fit="49">Search</span>
            </div>
            <div class="fline"></div>
            <div class="fscroll">
              <div class="fsec"><span v-fit="129">Filters on this visual</span><i>...</i></div>
              <div v-for="f in filters" :key="f[0]" class="fcard"><div><span v-fit="f[1]">{{ f[0] }}</span></div><div><span v-fit="40">is (All)</span></div></div>
              <div class="fcard add"><span v-fit="134">Add data fields here</span></div>
              <div class="fsec two"><span v-fit="126">Filters on this page</span><i>...</i></div>
              <div class="fcard add"><span v-fit="134">Add data fields here</span></div>
              <div class="fbar"></div>
            </div>
          </aside>
        </div>
        <div class="pages">
          <svg width="7" height="11" viewBox="0 0 7 11"><path d="M6.500 0v11L0 5.500z" fill="#c3c1c4" /></svg>
          <svg width="7" height="11" viewBox="0 0 7 11"><path d="M.5 0v11L7 5.500z" fill="#c3c1c4" /></svg>
          <div class="ptab"><span v-fit="44">Page 1</span></div>
          <div class="padd"><svg width="15" height="15" viewBox="0 0 15 15"><path d="M7.500 0v15M0 7.500h15" stroke="#fff" stroke-width="3.600" /></svg></div>
        </div>
      </div>

      <aside class="viz">
        <div class="phead"><span v-fit="124">Visualizations</span>
          <svg width="17" height="17" viewBox="0 0 17 17" fill="none" stroke="#252423" stroke-width="1.300"><path d="M1 1l7.500 7.500L1 16M8 1l7.500 7.500L8 16" /></svg>
        </div>
        <div class="build"><span v-fit="78">Build visual</span></div>
        <div class="vtabs">
          <div class="vtab on"><svg width="40" height="40" viewBox="0 0 40 40"><path d="M5 5.500h24" stroke="#252423" stroke-width="1.600" /><rect x="5.500" y="11.500" width="29" height="9.500" fill="#117865" stroke="#252423" stroke-width="1.400" stroke-dasharray="2.500 1.500" /><rect x="5.500" y="25" width="29" height="9.500" fill="#117865" stroke="#252423" stroke-width="1.400" stroke-dasharray="2.500 1.500" /></svg></div>
          <svg width="30" height="32" viewBox="0 0 30 32" fill="none" stroke="#252423" stroke-width="1.500"><path d="M2 25V13h8M10 18V2h7v14M17 8h8v3M27 11c-5 3-11 9-13 12l3 3c4-3 9-10 10-15zM14 23c-5 0-3 5-8 6 5 2 11 1 11-3" /></svg>
          <svg width="32" height="32" viewBox="0 0 32 32" fill="none" stroke="#252423" stroke-width="1.600"><circle cx="13.500" cy="14" r="12" /><path d="M2 14l6-4 5 4 9-7M8 16v7M13 18v7M18 15v8M22 14v6" /><path d="M22 22l8.500 8.500" stroke-width="3.600" /></svg>
        </div>
        <svg class="notch" width="226" height="12" viewBox="0 0 226 12"><path d="M0 10.500h20L30.500 1 41 10.500h185" fill="#f3f2f1" stroke="#8f8d8b" stroke-width="1.400" /></svg>
        <div class="vgrid">
          <div v-for="(v, i) in viz" :key="i" class="vcell" :class="{ sel: i === 1 }"><svg width="24" height="24" viewBox="0 0 24 24" overflow="visible" v-html="v"></svg></div>
          <div class="vcell"><svg width="24" height="24" viewBox="0 0 24 24" fill="#252423"><circle cx="3.500" cy="8" r="1" /><circle cx="11" cy="8" r="1" /><circle cx="18.500" cy="8" r="1" /></svg></div>
        </div>
        <div class="wells">
          <div class="wbar"></div>
          <div class="wlabel x"><span v-fit="39">X-axis</span></div>
          <div class="well one"><div class="chip"><span v-fit="107">TransactionTime</span><svg width="34" height="12" viewBox="0 0 34 12" fill="none" stroke="#3b3a39" stroke-width="1.200"><path d="M1 2l7 7 7-7M23 1l10 10M33 1L23 11" /></svg></div></div>
          <div class="wlabel y"><span v-fit="39">Y-axis</span></div>
          <div class="well many"><div v-for="f in yFields" :key="f[0]" class="chip"><span v-fit="f[1]">{{ f[0] }}</span><svg width="34" height="12" viewBox="0 0 34 12" fill="none" stroke="#3b3a39" stroke-width="1.200"><path d="M1 2l7 7 7-7M23 1l10 10M33 1L23 11" /></svg></div></div>
          <div class="wlabel l"><span v-fit="48">Legend</span></div>
          <div class="well empty"><span v-fit="133">Add data fields here</span></div>
          <div class="wlabel s"><span v-fit="100">Small multiples</span></div>
        </div>
      </aside>

      <aside class="data">
        <div class="phead"><span v-fit="42">Data</span>
          <svg width="17" height="17" viewBox="0 0 17 17" fill="none" stroke="#252423" stroke-width="1.300"><path d="M1 1l7.500 7.500L1 16M8 1l7.500 7.500L8 16" /></svg>
        </div>
        <div class="dsearch">
          <svg width="19" height="19" viewBox="0 0 19 19" fill="none" stroke="#3b3a39" stroke-width="1.300"><circle cx="12" cy="7" r="6" /><path d="M7.500 11.500L1 18" /></svg>
          <span v-fit="51">Search</span>
        </div>
        <div class="root">
          <svg width="15" height="9" viewBox="0 0 15 9"><path d="M.7.7l6.800 7 6.800-7" fill="none" stroke="#605e5c" stroke-width="1.200" /></svg>
          <svg class="tbl" width="25" height="25" viewBox="0 0 25 25"><path d="M1 2h16v15H1zM1 6.500h16M1 11.500h16M6.500 4v13M12 4v13" fill="none" stroke="#3b3a39" stroke-width="1.500" /><path d="M1 2.500h16" stroke="#3b3a39" stroke-width="3" /><circle cx="16.500" cy="17" r="7.300" fill="#117865" /><path d="M13.500 17l2.300 2.300 4-4.300" fill="none" stroke="#fff" stroke-width="1.700" /></svg>
          <span v-fit="118">bank_transactions</span>
        </div>
        <div v-for="f in fields" :key="f.label" class="field" :class="{ hover: f.hover }">
          <div class="exp"><svg v-if="f.expand" width="9" height="15" viewBox="0 0 9 15"><path d="M1 1l7 6.500L1 14" fill="none" stroke="#605e5c" stroke-width="1.300" /></svg></div>
          <div class="cb" :class="{ on: f.on }"><svg v-if="f.on" width="15" height="15" viewBox="0 0 15 15"><path d="M2.500 7l3.200 3.500L12.500 4" fill="none" stroke="#fff" stroke-width="1.500" /></svg></div>
          <div class="fi"><svg v-if="f.icon" width="20" height="20" viewBox="0 0 20 20" v-html="fieldIcons[f.icon]"></svg></div>
          <span v-fit="f.w">{{ f.label }}</span>
          <svg v-if="f.more" class="dots" width="15" height="4" viewBox="0 0 15 4" fill="#3b3a39"><circle cx="1.500" cy="2" r="1" /><circle cx="7.300" cy="2" r="1" /><circle cx="13" cy="2" r="1" /></svg>
        </div>
      </aside>
    </main>

    <footer class="status">
      <span v-fit="74">Page 1 of 1</span>
      <svg class="zoombar" width="156" height="20" viewBox="0 0 156 20"><path d="M1 11h6M13 10h125M144 10.500h10M149 5.500v10" stroke="#605e5c" stroke-width="1.600" /><path d="M56.500 3.500v13" stroke="#605e5c" stroke-width="5" /><path d="M75 6.500v7" stroke="#605e5c" stroke-width="1.800" /></svg>
      <span v-fit="29" class="pct">73%</span>
      <svg class="fit" width="21" height="17" viewBox="0 0 21 17" fill="none" stroke="#605e5c"><path d="M1 1h19v15H1z" stroke-width="1.800" /><path d="M4 6.500V4h3M14 4h3v2.500M17 10.500V13h-3M7 13H4v-2.500" stroke-width="1.200" /></svg>
      <span v-fit="240" class="upd">Update available (click to download)</span>
    </footer>

    <footer class="taskbar">
      <svg class="weather" width="24" height="30" viewBox="0 0 24 30"><path d="M4 7c4 3 5 6 4 9-2 4-8 3-8-2 0-2 2-2 4-7z" fill="#f4693a" /><circle cx="4.500" cy="14.500" r="2" fill="#fbb03b" /><path d="M13 4a4 4 0 0 1 8 0v13a6.500 6.500 0 1 1-8 0z" fill="#cfe3f5" /><path d="M17 10v13" stroke="#e53950" stroke-width="3.400" /><circle cx="17" cy="22.500" r="4.200" fill="#e0304c" /></svg>
      <div class="wtext"><div><span v-fit="31">32°C</span></div><div class="feels"><span v-fit="79">Feels hotter</span></div></div>
      <svg class="win" width="30" height="30" viewBox="0 0 30 30"><defs><linearGradient id="wn" x1="0" y1="0" x2="1" y2="1"><stop offset="0" stop-color="#7cecfb" /><stop offset="1" stop-color="#0a8df0" /></linearGradient></defs><path d="M0 1.500Q0 .5 1 .5h13v14H0zM15.500.5h13q1 0 1 1v13h-14zM0 16h14v14H1q-1 0-1-1zM15.500 16h14v13q0 1-1 1h-13z" fill="url(#wn)" /></svg>
      <div class="tsearch">
        <svg width="19" height="19" viewBox="0 0 19 19" fill="none" stroke="#2b2b2b" stroke-width="2"><circle cx="8" cy="8" r="6.700" /><path d="M13 13l5 5" /></svg>
        <span v-fit="51">Search</span>
        <svg class="bing" width="25" height="26" viewBox="0 0 25 26"><defs><linearGradient id="bg" x1="0" y1="0" x2="1" y2="1"><stop offset="0" stop-color="#29c3e8" /><stop offset="1" stop-color="#1b48c8" /></linearGradient></defs><path d="M13 1.500a11 11 0 1 1-5 21l-6 1.500 1.500-6A11 11 0 0 1 13 1.500z" fill="#fff" stroke="url(#bg)" stroke-width="2.200" /><path d="M8 5l3 1v9l4-1-2-4 6 3v4l-7 4-4-2z" fill="url(#bg)" /></svg>
      </div>
      <div v-for="(t, i) in taskIcons" :key="i" class="tcell" :class="{ on: t.on }">
        <svg width="30" height="30" viewBox="0 0 30 30" overflow="visible" v-html="t.svg"></svg>
        <i :class="t.dot"></i>
      </div>
      <div class="tray">
        <svg width="14" height="9" viewBox="0 0 14 9"><path d="M1 7.500L7 1.500l6 6" fill="none" stroke="#fff" stroke-width="1.800" /></svg>
        <div class="lang"><div><span v-fit="29">ENG</span></div><div><span v-fit="15">IN</span></div></div>
        <svg width="22" height="17" viewBox="0 0 22 17" fill="none" stroke="#fff" stroke-width="1.500"><path d="M1 6C7 0 15 0 21 6M4 9.500c4-4 10-4 14 0M7 12.500c2-2 6-2 8 0" /><circle cx="11" cy="14.500" r="1.300" fill="#fff" /></svg>
        <svg class="spk" width="22" height="17" viewBox="0 0 22 17" fill="none" stroke="#fff" stroke-width="1.500"><path d="M1 6v5h3l5 4V2L4 6zM11.500 6q2 2.500 0 5" /><path d="M14 4q4 4.500 0 9M16.500 2q6 6.500 0 13" opacity=".4" /></svg>
        <svg class="bat" width="21" height="14" viewBox="0 0 21 14"><rect x=".8" y="1" width="17" height="12" rx="2.500" fill="none" stroke="#fff" stroke-width="1.500" /><rect x="3" y="3.200" width="12" height="7.600" rx="1" fill="#fff" /><path d="M19.500 5v4" stroke="#fff" stroke-width="2" /></svg>
        <div class="clock"><div><span v-fit="37">23:20</span></div><div><span v-fit="78">03-06-2023</span></div></div>
      </div>
    </footer>
  </div>
</template>

<style>
body { background: #f3f2f1; overflow: hidden; }
</style>

<style scoped>
.app, .app * { box-sizing: border-box; }
.app { width: 1920px; height: 1080px; display: flex; flex-direction: column; overflow: hidden; font-family: "Open Sans", "Noto Sans", sans-serif; font-size: 14.5px; color: #252423; background: #f3f2f1; white-space: nowrap; }
svg { display: block; flex: none; }
.titlebar { height: 43px; flex: none; background: #3b3a37; display: flex; color: #fff; }
.quick { width: 775px; flex: none; display: flex; padding: 13px 0 0 22px; }
.quick svg { margin-right: 20px; }
.quick svg.dim { margin-right: 12px; }
.doc { font-size: 15.5px; line-height: 23px; }
.topsearch { width: 500px; flex: none; height: 30px; margin-top: 6px; background: #cecdcb; border: 1px solid #e1dfdd; border-radius: 2px; display: flex; align-items: center; padding-left: 20px; color: #2a6358; font-size: 16px; }
.topsearch span { margin-left: 15px; padding-top: 1px; }
.winbtns { flex: 1; display: flex; align-items: flex-start; }
.signin { margin: 11px 0 0 378px; font-size: 15px; line-height: 21px; flex: none; }
.avatar { margin: 8px 39px 0 11px !important; }
.winbtns svg { margin-top: 16px; margin-right: 40px; }
.tabs { height: 38px; flex: none; display: flex; font-size: 17px; }
.tab { display: block; height: 38px; line-height: 38px; flex: none; }
.tab b, .ctx b { font-weight: 400; display: inline-block; }
.tab.active { border-bottom: 3px solid #117865; }
.tab.active b { font-weight: 600; }
.ctx { background: #fff; line-height: 38px; color: #0b4a43; height: 38px; flex: none; }
.ctx b { font-weight: 600; }
.ctx.first { margin-left: 19px; width: 94px; padding-left: 19px; }
.ctx.second { margin-left: 5px; width: 124px; padding-left: 19px; }
.ribbon { height: 119px; flex: none; display: flex; padding-top: 7px; color: #3b3a39; }
.group { height: 110px; border-right: 1px solid #c8c6c4; flex: none; }
.group.clip { width: 201px; }
.gbody { display: flex; height: 94px; padding-top: 4px; }
.rbtn { flex: none; display: flex; flex-direction: column; align-items: center; font-size: 14.5px; }
.rbtn.off { color: #a19f9d; }
.rbtn > svg { margin-bottom: 4px; }
.rline { height: 20px; line-height: 20px; display: flex; align-items: center; }
.caret { margin: 4px 0 0 3px; }
.rbtn.off .caret { margin-left: 0; }
.gname { text-align: center; font-size: 12.5px; line-height: 18px; height: 16px; }
.clip-body { display: flex; height: 94px; }
.paste { width: 62px; padding: 5px 0 0 16px; color: #a8a6a4; }
.paste svg { margin-bottom: 3px; }
.paste span { margin-left: 1px; line-height: 20px; }
.clip-list { margin-top: -1px; }
.clip-list > div { height: 30px; display: flex; align-items: center; }
.clip-list svg { margin: 0 5px 0 3px; }
.collapse { margin: 97px 6px 0 auto; }
.main { height: 791px; flex: none; display: flex; box-shadow: inset 0 4px 5px -3px #c9c8c7; }
.rail { width: 51px; border-right: 1px solid #d6d4d2; flex: none; }
.railitem { height: 50px; display: flex; align-items: center; padding: 0 0 2px 15px; }
.railitem + .railitem + .railitem { padding-left: 14px; }
.railitem.on { border-left: 3px solid #117865; padding: 0 0 0 12px; }
.center { width: 1418px; flex: none; display: flex; flex-direction: column; }
.stage { height: 746px; display: flex; }
.canvas { width: 1166px; position: relative; background: linear-gradient(114deg, #4b4795 0%, #4b4795 24%, #5d4aa0 39%, #6d4da9 60%, #7f51b5 78%, #8d55be 90%, #9057c2 100%); }
.pageedge { position: absolute; left: 0; right: 0; top: 656px; border-top: 1px dotted #55545f; }
.vtools { position: absolute; left: 537px; top: 92px; display: flex; gap: 4px; }
.vt { width: 31px; height: 30px; background: #fafafd; border: 1px solid #cfc6e6; }
.vt.info { margin-right: 18px; }
.chart { position: absolute; left: 157px; top: 122px; }
.filters { width: 252px; background: #9156c1; border-left: 1px solid #aaa5a5; border-right: 1px solid #e1dfdd; color: #fff; }
.fhead { display: flex; align-items: center; height: 49px; padding: 0 12px 0 14px; }
.ftitle { font-size: 17.5px; font-weight: 700; margin-left: 9px; }
.eye { margin: 0 20px 4px auto; }
.chev { margin-bottom: 1px; }
.fsearch { margin: 8px 0 0 10px; width: 226px; height: 38px; border: 1px solid #b9b3ab; border-radius: 2px; display: flex; align-items: center; padding-left: 12px; font-size: 16px; }
.fsearch span { margin-left: 17px; }
.fline { height: 1px; margin-top: 5px; background: #b0a6ac; }
.fscroll { position: relative; padding-left: 10px; }
.fsec { height: 52px; padding-top: 21px; line-height: 20px; display: flex; width: 226px; justify-content: space-between; }
.fsec i { font-style: normal; letter-spacing: 1.5px; }
.fsec.two { height: 57.5px; padding-top: 26px; }
.fcard { width: 230px; height: 57px; border: 1px solid #cbbfd0; border-radius: 2px; margin-bottom: 7.55px; padding: 4px 10px; line-height: 22.5px; }
.fcard.add { display: flex; align-items: center; justify-content: center; padding-top: 5px; }
.fbar { position: absolute; right: 0; top: 10px; width: 7px; height: 536px; border-radius: 4px; background: #a585b8; }
.pages { height: 45px; border-bottom: 1px solid #d6d4d2; display: flex; align-items: flex-start; padding-left: 7px; }
.pages > svg { margin-top: 16px; margin-right: 21px; }
.pages > svg + svg { margin-right: 7px; }
.ptab { width: 95px; height: 45px; background: #fff; border-left: 1px solid #a8a6a4; border-right: 1px solid #c8c6c4; border-bottom: 5px solid #117865; padding-left: 25px; line-height: 44px; }
.padd { width: 49px; height: 40px; margin-top: 2px; background: #117865; display: flex; align-items: center; justify-content: center; }
.viz { width: 226px; border-right: 1px solid #d6d4d2; border-bottom: 1px solid #d6d4d2; overflow: hidden; flex: none; display: flex; flex-direction: column; }
.phead { height: 48px; flex: none; display: flex; align-items: center; justify-content: space-between; padding: 1px 9px 0 10px; font-size: 18px; font-weight: 600; }
.build { height: 24px; flex: none; line-height: 19px; padding-left: 10px; }
.vtabs { height: 40px; flex: none; display: flex; align-items: center; padding: 0 14px 0 10px; justify-content: space-between; }
.vtab.on { width: 40px; height: 40px; background: #d0cfce; border-radius: 2px; }
.notch { margin-top: 5px; }
.vgrid { display: grid; grid-template-columns: repeat(6, 35px); grid-auto-rows: 35.1px; padding: 9px 0 0 10px; height: 257px; flex: none; border-bottom: 1px solid #d6d4d2; }
.vcell { width: 30px; height: 30px; padding: 3px; border: 1px solid transparent; }
.vcell.sel { background: #e1dfdd; border-color: #605e5c; }
.wells { position: relative; flex: 1; padding-left: 5px; }
.wbar { position: absolute; right: 0; top: 3px; width: 7px; height: 232px; border-radius: 4px; background: #d0cfce; }
.wlabel { padding-left: 10px; line-height: 20px; height: 38px; padding-top: 12px; }
.wlabel.y { height: 39px; padding-top: 12px; }
.wlabel.l { height: 40px; padding-top: 14px; }
.wlabel.s { padding-top: 14px; }
.well { width: 213px; background: #fff; border: 1px dashed #c3c1c0; padding: 4px 3px; }
.well.one { height: 46px; }
.well.many { height: 165px; padding-top: 4px; }
.well.empty { height: 35px; padding: 0 13px; line-height: 34px; }
.chip { width: 205px; height: 28px; margin-bottom: 2.3px; border: 1px solid #c3c1c0; border-radius: 2px; background: #ebeae9; display: flex; align-items: center; justify-content: space-between; padding: 0 4px 0 5px; line-height: 26px; }
.data { width: 225px; flex: none; }
.dsearch { margin: 9px 0 0 5px; width: 215px; height: 33px; border: 1px solid #605e5c; border-radius: 2px; background: #fff; display: flex; align-items: center; padding-left: 9px; font-size: 16.5px; color: #484644; }
.dsearch span { margin-left: 8px; padding-top: 1px; }
.root { display: flex; align-items: center; height: 30px; margin-top: 11px; padding-left: 9px; color: #484644; }
.root .tbl { margin: 6px 0 0 3px; }
.root span { margin-left: -1px; }
.field { height: 30px; margin: 0 6px; display: flex; align-items: center; color: #3b3a39; }
.field.hover { background: #eae9e8; }
.exp { width: 42px; padding-left: 25px; flex: none; }
.cb { width: 15px; height: 15px; border: 1px solid #8a8886; border-radius: 2px; flex: none; }
.cb.on { background: #117865; border: none; }
.fi { width: 32px; padding-left: 7px; flex: none; }
.dots { margin: 0 3px 3px auto; }
.status { height: 30px; flex: none; border-bottom: 1px solid #4a4947; display: flex; align-items: center; color: #555351; padding: 0 6px 2px; font-size: 15px; line-height: 26px; }
.zoombar { margin-left: auto; }
.pct { margin-left: 20px; color: #706e6c; }
.fit { margin: 0 22px 0 24px; }
.upd { color: #555351; }
.taskbar { height: 59px; flex: none; display: flex; align-items: center; color: #fff; font-size: 14.5px; background: linear-gradient(90deg, #232224 0%, #232324 16%, #2b221f 20%, #33221a 24%, #292320 33%, #2c231f 42%, #302318 52%, #32241a 70%, #331f16 86%, #2a2122 100%); }
.weather { margin: -3px 14px 0 27px; }
.wtext { width: 437px; line-height: 20px; margin: -2px 0 0 -1px; }
.feels { color: #cfcdcb; }
.win { margin-right: 17px; }
.tsearch { width: 273px; height: 38px; border-radius: 19px; background: #f2f2f2; margin-right: 4px; display: flex; align-items: center; padding: 0 6px 0 14px; color: #555; font-size: 16px; flex: none; }
.tsearch span { margin-left: 12px; }
.bing { margin-left: auto; }
.tcell { width: 49px; height: 50px; margin: 0 3px; border-radius: 5px; flex: none; display: flex; flex-direction: column; align-items: center; padding-top: 10px; }
.tcell.on { background: #3f3129; border: 1px solid #4b3d35; padding-top: 9px; }
.tcell i { width: 8px; height: 4px; border-radius: 2px; margin-top: 5px; }
.tcell i.g { background: #9b948e; }
.tcell i.b { background: #4cc2ff; width: 20px; }
.tray { margin-left: auto; padding-right: 24px; display: flex; align-items: center; line-height: 20px; }
.lang { text-align: center; width: 30px; margin: -2px 21px 0 26px; }
.spk { margin: 0 8px 0 8px; }
.bat { margin-right: 18px; }
.clock { text-align: right; width: 79px; margin-top: -3px; }
</style>
